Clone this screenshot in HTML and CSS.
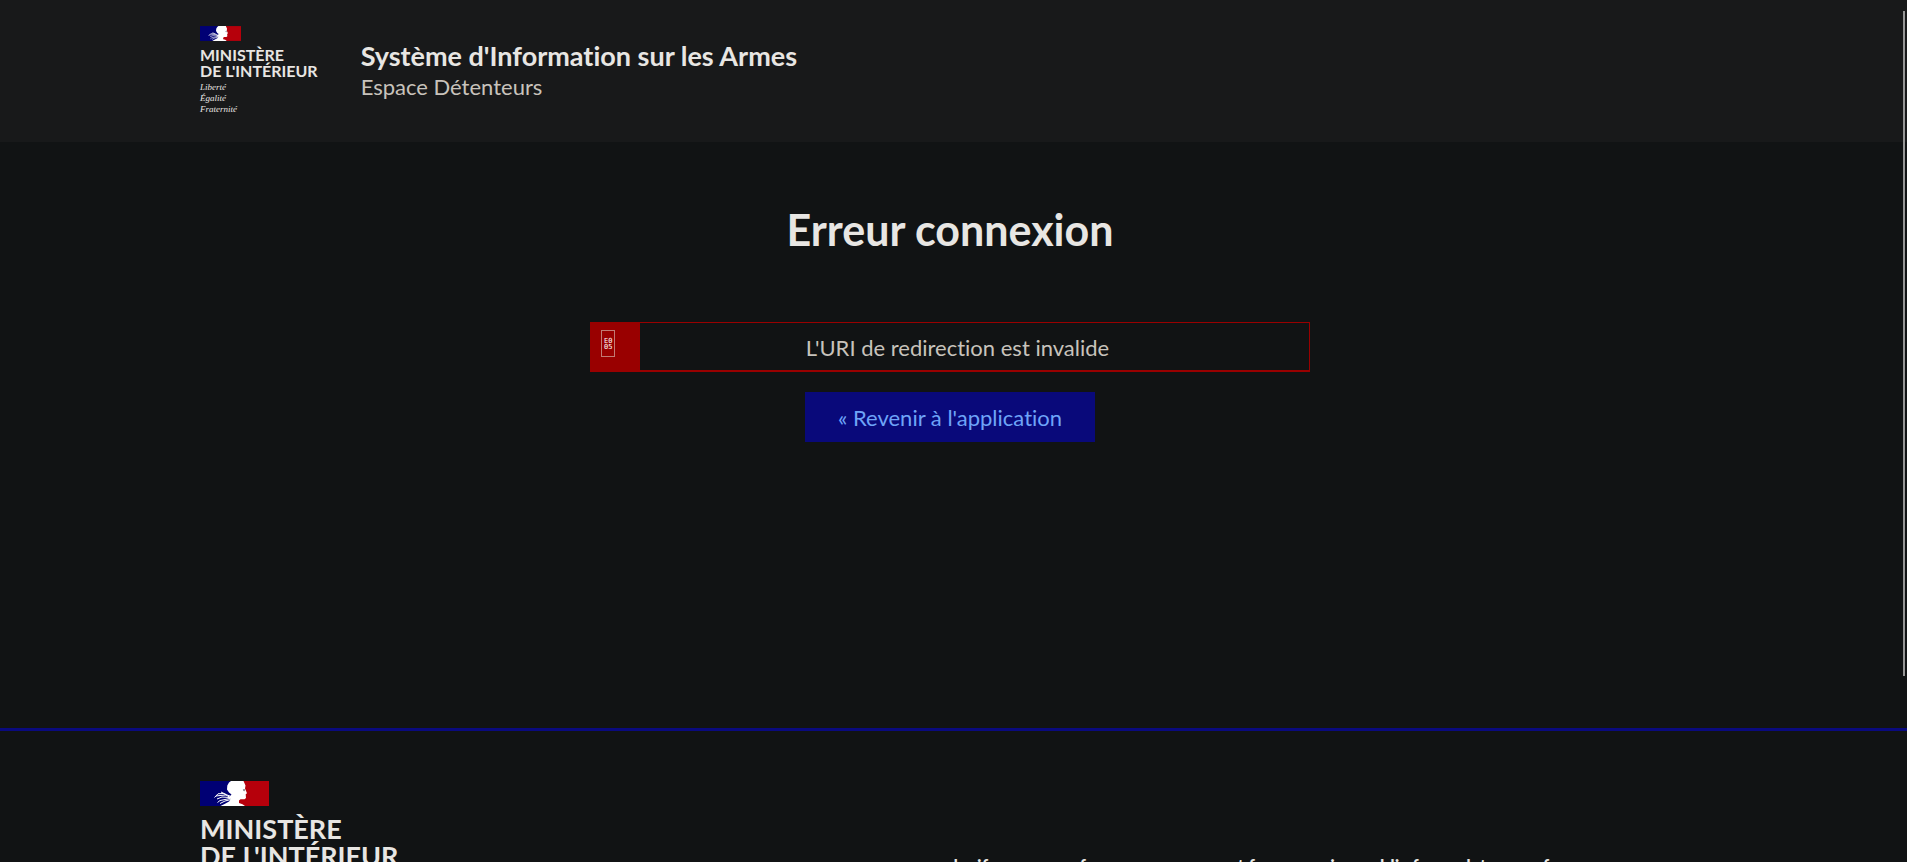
FILE: index.html
```html
<!DOCTYPE html>
<html lang="fr">
<head>
<meta charset="utf-8">
<title>Erreur connexion</title>
<link rel="stylesheet" href="styles.css">
</head>
<body>
<svg class="defs" aria-hidden="true">
  <symbol id="flag" viewBox="0 0 69 25">
    <path fill="#000074" d="M0 0h36v25H0z"/>
    <path fill="#b6000b" d="M36 0h33v25H36z"/>
    <path fill="#fff" d="M31 0H43.500L45.500 4.500 45 7.500 47 12.200 45.700 13.300 46 17 44.500 18.300 40.500 18.200 39 19.500V22L42.500 23.200 45 25H20.500L25 22.800 29 20.500 31 18 27.500 17.300 29.500 15.500 31.500 13.500 29 11.500 27 8.500 27.300 4.500 29 1.500z"/>
    <path fill="none" stroke="#fff" stroke-width="1" d="M14.500 16.500 18 12.800 23 12.500 30 15M16 15 20 14.500 26 14 31 17M17 18 22 16 30 16.500M17.500 21.500 20 19.500 30 17.500M20 22.500 25 20 31 18.500M21 11 26 13.500"/>
    <path fill="#8d8d95" d="M42.800 8.300 45.200 8 44.800 10.300 43.300 10z"/>
  </symbol>
</svg>
<header class="header">
  <div class="container header-body">
    <div class="brand">
      <svg class="flag" aria-hidden="true"><use href="#flag"/></svg>
      <p class="ministry">Ministère<br>de l'Intérieur</p>
      <p class="motto">Liberté<br>Égalité<br>Fraternité</p>
    </div>
    <div class="service">
      <p class="service-title">Système d'Information sur les Armes</p>
      <p class="service-tagline">Espace Détenteurs</p>
    </div>
  </div>
</header>
<main class="main">
  <h1 class="title">Erreur connexion</h1>
  <div class="alert" role="alert">
    <span class="alert-icon" aria-hidden="true"><span class="code-box">E0<br>05</span></span>
    <p class="alert-text">L'URI de redirection est invalide</p>
  </div>
  <a class="button" href="#">« Revenir à l'application</a>
</main>
<footer class="footer">
  <div class="container footer-body">
    <div class="brand brand-large">
      <svg class="flag" aria-hidden="true"><use href="#flag"/></svg>
      <p class="ministry">Ministère<br>de l'Intérieur</p>
    </div>
    <nav class="footer-links">
      <a href="#">legifrance.gouv.fr</a>
      <a href="#">gouvernement.fr</a>
      <a href="#">service-public.fr</a>
      <a href="#">data.gouv.fr</a>
    </nav>
  </div>
</footer>
<div class="scroll-thumb"></div>
</body>
</html>
```
FILE: styles.css
```css
* { box-sizing: border-box; }

body {
  display: flex;
  flex-direction: column;
  height: 100vh;
  margin: 0;
  overflow: hidden;
  background: #111314;
  color: #c8c3bc;
  font: 22px/30px Lato, "Open Sans", sans-serif;
  font-variant-ligatures: none;
}

p, h1 { margin: 0; }

.defs { position: absolute; width: 0; height: 0; }

.header, .main, .footer { flex: none; padding-right: 7px; }

.header { background: #18191a; }

.container {
  display: flex;
  max-width: 1560px;
  margin: 0 auto;
  padding: 0 30px;
}

.header-body {
  gap: 43px;
  height: 142px;
}

.brand { padding-top: 26px; }

.flag {
  display: block;
  width: 41px;
  height: 15px;
}

.ministry {
  margin-top: 6px;
  color: #e8e6e3;
  font-size: 16px;
  font-weight: 700;
  line-height: 16px;
  text-transform: uppercase;
}

.motto {
  margin-top: 3px;
  color: #e8e6e3;
  font: italic 9px/11px "Liberation Serif", serif;
}

.service { padding-top: 40px; }

.service-title {
  color: #e8e6e3;
  font-size: 27px;
  font-weight: 700;
  line-height: 32px;
}

.main {
  display: flex;
  flex-direction: column;
  align-items: center;
  height: 586px;
}

.title {
  margin-top: 63px;
  color: #e8e6e3;
  font-size: 43px;
  line-height: 50px;
}

.alert {
  display: flex;
  width: 720px;
  max-width: 100%;
  margin-top: 67px;
  border: 1px solid #990000;
  border-bottom-width: 2px;
}

.alert-icon {
  flex: none;
  width: 49px;
  padding: 7px 10px;
  background: #990000;
}

.code-box {
  display: block;
  width: 14px;
  height: 27px;
  padding: 7px 0 0 2px;
  border: 1px solid #c27a74;
  color: #fff;
  font: 7px/6px "DejaVu Sans Mono", monospace;
}

.alert-text {
  flex: 1;
  padding: 10px 34px 7px 0;
  text-align: center;
}

.button {
  margin-top: 20px;
  padding: 11px 33px 9px;
  background: #09097a;
  color: #6ea4f8;
  text-decoration: none;
}

.footer { border-top: 3px solid #0a0a7e; }

.footer-body { justify-content: space-between; }

.brand-large { padding-top: 50px; }

.brand-large .flag { width: 69px; height: 25px; }

.brand-large .ministry {
  margin-top: 9px;
  font-size: 27px;
  line-height: 27px;
}

.footer-links {
  display: flex;
  gap: 35px;
  padding: 120px 144px 0 0;
}

.footer-links a {
  color: #e8e6e3;
  font-size: 18px;
  font-weight: 700;
  text-decoration: none;
}

.scroll-thumb {
  position: absolute;
  top: 11px;
  right: 2px;
  width: 2px;
  height: 665px;
  background: #969696;
}
```
